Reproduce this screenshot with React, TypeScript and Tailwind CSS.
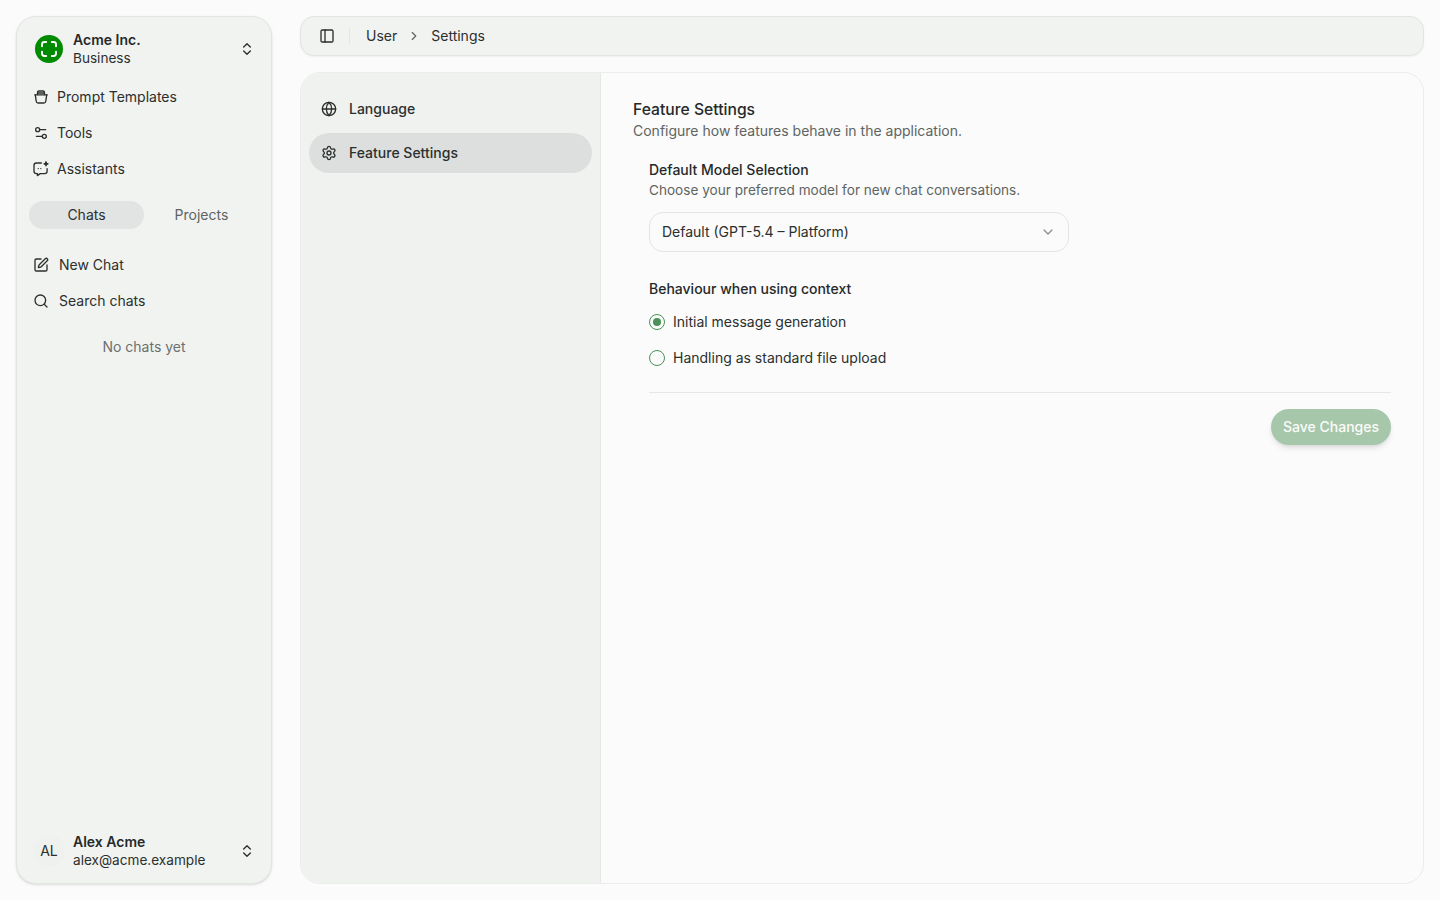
import React from "react";
import { ChevronDown, ChevronRight, ChevronsUpDown, Globe, PanelLeft, Search, Settings, Settings2, SquarePen } from "lucide-react";

function JarIcon() {
  return (
    <svg width="16" height="16" viewBox="0 0 16 16" fill="none" stroke="currentColor" strokeWidth="1.33" strokeLinecap="round" strokeLinejoin="round">
      <path d="M4.5 5.6V3.5A1.5 1.5 0 0 1 6 2h4a1.5 1.5 0 0 1 1.5 1.5v2.1" />
      <path d="M4.6 4h6.8" />
      <path d="M1.8 5.8h12.4" />
      <path d="M2.3 5.8l.9 6.4A2 2 0 0 0 5.2 14h5.6a2 2 0 0 0 2-1.8l.9-6.4" />
    </svg>
  );
}

function ChatSparkIcon() {
  return (
    <svg width="16" height="16" viewBox="0 0 16 16" fill="none" stroke="currentColor" strokeWidth="1.33" strokeLinecap="round" strokeLinejoin="round" className="overflow-visible">
      <path d="M8.4 2H3.4C2 2 1 3 1 4.4v5.8c0 1.4 1 2.4 2.4 2.4h1v2l2.8-2h4.5c1.4 0 2.4-1 2.4-2.4V7.6" />
      <path d="M13 .8l.5 1.5 1.5.5-1.5.5-.5 1.5-.5-1.5-1.5-.5 1.5-.5z" fill="currentColor" />
      <path d="M5.2 7.6h.01M7.8 7.6h.01" />
    </svg>
  );
}

function LogoMark() {
  return (
    <div className="w-7 h-7 rounded-full bg-[#008a00] flex items-center justify-center">
      <svg width="18" height="18" viewBox="0 0 18 18" fill="none" stroke="#ffffff" strokeWidth="1.9" strokeLinecap="round">
        <path d="M2 6.2V4.4A2.4 2.4 0 0 1 4.4 2h1.8" />
        <path d="M11.8 2h1.8A2.4 2.4 0 0 1 16 4.4v1.8" />
        <path d="M16 11.8v1.8a2.4 2.4 0 0 1-2.4 2.4h-1.8" />
        <path d="M6.2 16H4.4A2.4 2.4 0 0 1 2 13.6v-1.8" />
      </svg>
    </div>
  );
}

function NavRow({ icon, label, gap }: { icon: React.ReactNode; label: string; gap: string }) {
  return (
    <div className={`h-9 flex items-center px-4 text-sm text-[#2b2f2d] ${gap}`}>
      <span className="w-4 h-4 flex items-center justify-center shrink-0">{icon}</span>
      <span>{label}</span>
    </div>
  );
}

function Sidebar() {
  return (
    <aside className="w-64 shrink-0 flex flex-col rounded-[20px] border border-[#e3e5e3] bg-[#f1f3f1] shadow-sm text-[#2b2f2d]">
      <div className="h-[62px] shrink-0 flex items-center pl-[18px] pr-4 pt-0.5">
        <LogoMark />
        <div className="ml-2.5 flex-1 text-sm leading-[18px]">
          <div className="font-semibold text-[#26292a]">Acme Inc.</div>
          <div className="text-[13.6px]">Business</div>
        </div>
        <ChevronsUpDown size={16} strokeWidth={2} />
      </div>
      <div className="flex flex-col">
        <NavRow icon={<JarIcon />} label="Prompt Templates" gap="gap-2" />
        <NavRow icon={<Settings2 size={16} strokeWidth={2} />} label="Tools" gap="gap-2" />
        <NavRow icon={<ChatSparkIcon />} label="Assistants" gap="gap-2" />
      </div>
      <div className="mt-[14px] mx-3 grid grid-cols-2 text-sm">
        <div className="h-7 rounded-full bg-[#e2e4e3] flex items-center justify-center">Chats</div>
        <div className="h-7 flex items-center justify-center text-[#5f6462]">Projects</div>
      </div>
      <div className="mt-[18px] flex flex-col">
        <NavRow icon={<SquarePen size={16} strokeWidth={2} />} label="New Chat" gap="gap-2.5" />
        <NavRow icon={<Search size={16} strokeWidth={2} />} label="Search chats" gap="gap-2.5" />
      </div>
      <div className="mt-[18px] text-center text-sm text-[#6b706e]">No chats yet</div>
      <div className="mt-auto h-[66px] flex items-center pl-[18px] pr-4 pt-0.5">
        <div className="w-8 h-8 -ml-0.5 rounded-full bg-[#eff1ef] flex items-center justify-center text-sm">AL</div>
        <div className="ml-2 flex-1 text-sm leading-[18px]">
          <div className="font-semibold text-[#26292a]">Alex Acme</div>
          <div className="text-[13.6px]">alex@acme.example</div>
        </div>
        <ChevronsUpDown size={16} strokeWidth={2} />
      </div>
    </aside>
  );
}

function RadioRow({ label, checked }: { label: string; checked?: boolean }) {
  return (
    <div className="h-9 flex items-center gap-2 text-sm text-[#2b2f2d]">
      <span className="w-4 h-4 rounded-full border border-[#4c9159] bg-[#fafbfa] flex items-center justify-center">
        {checked && <span className="w-2 h-2 rounded-full bg-[#4c9159]" />}
      </span>
      <span>{label}</span>
    </div>
  );
}

export default function App() {
  return (
    <div className="h-[900px] flex gap-7 p-4 bg-[#fafbfa] overflow-hidden font-['Inter',sans-serif]">
      <Sidebar />
      <div className="flex-1 flex flex-col gap-4 min-w-0">
        <header className="h-10 shrink-0 flex items-center px-[18px] rounded-[14px] border border-[#e3e5e3] bg-[#f1f3f1] shadow-xs text-sm text-[#2b2f2d]">
          <PanelLeft size={16} strokeWidth={2} />
          <div className="ml-[14px] mr-4 w-px h-4 bg-[#e3e5e3]" />
          <span>User</span>
          <ChevronRight size={14} strokeWidth={2} className="mx-[10px] text-[#5f6462]" />
          <span>Settings</span>
        </header>
        <main className="flex-1 flex rounded-[20px] border border-[#ebedeb] bg-[#fafbfa] overflow-hidden">
          <nav className="w-[300px] shrink-0 bg-[#f0f2f0] border-r border-[#e6e8e6] p-2 pt-4 text-sm font-medium text-[#2b2f2d] flex flex-col gap-1">
            <div className="h-10 flex items-center gap-3 px-3 rounded-[20px]">
              <Globe size={16} strokeWidth={2} />
              <span>Language</span>
            </div>
            <div className="h-10 flex items-center gap-3 px-3 rounded-[20px] bg-[#dcdfdd]">
              <Settings size={16} strokeWidth={2} />
              <span>Feature Settings</span>
            </div>
          </nav>
          <section className="flex-1 pl-8 pr-8 pt-[26px]">
            <h1 className="text-[15.7px] leading-[22px] font-medium text-[#26292a]">Feature Settings</h1>
            <p className="text-sm leading-5 text-[#5f6462]">Configure how features behave in the application.</p>
            <div className="pl-4 mt-[19px]">
              <h2 className="text-sm leading-5 font-medium text-[#26292a]">Default Model Selection</h2>
              <p className="text-[13.6px] leading-5 text-[#5f6462]">Choose your preferred model for new chat conversations.</p>
              <div className="mt-3 w-[420px] h-10 flex items-center justify-between pl-3 pr-3 rounded-[14px] border border-[#e3e5e3] bg-[#fafbfa] text-sm text-[#2b2f2d]">
                <span>Default (GPT-5.4 – Platform)</span>
                <ChevronDown size={16} strokeWidth={2} className="text-[#8a8e8c]" />
              </div>
              <h2 className="mt-[27px] text-sm leading-5 font-medium text-[#26292a]">Behaviour when using context</h2>
              <div className="mt-[5px] flex flex-col">
                <RadioRow label="Initial message generation" checked />
                <RadioRow label="Handling as standard file upload" />
              </div>
              <div className="mt-4 border-t border-[#e6e8e6] pt-4 flex justify-end">
                <button className="h-9 px-3 rounded-full bg-[#a7c7aa] text-sm font-medium text-[#fafbfa] shadow-md">Save Changes</button>
              </div>
            </div>
          </section>
        </main>
      </div>
    </div>
  );
}
